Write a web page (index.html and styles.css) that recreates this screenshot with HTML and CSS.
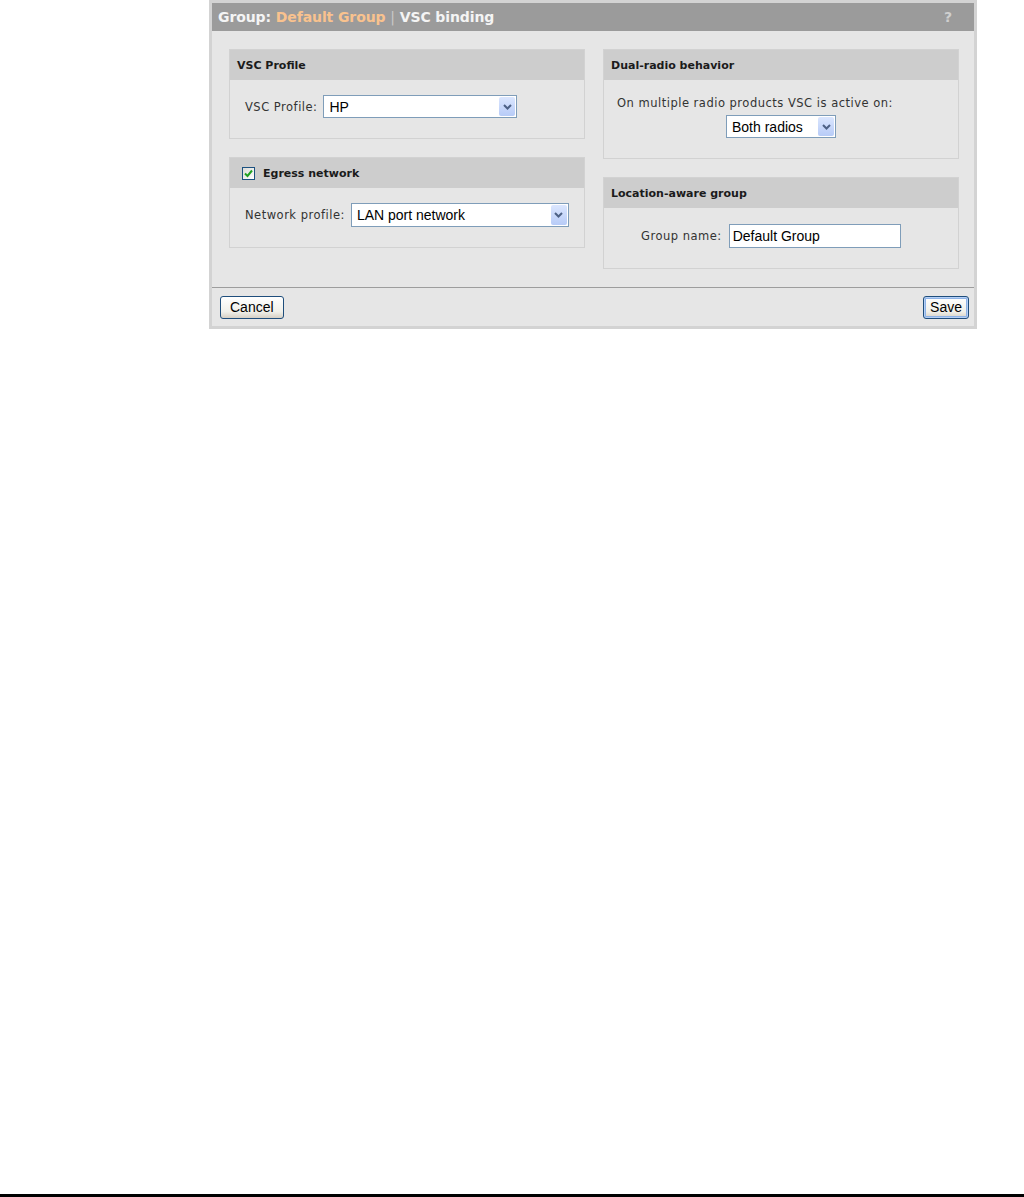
FILE: index.html
```html
<!DOCTYPE html>
<html lang="en">
<head>
  <meta charset="UTF-8">
  <title>Group: Default Group | VSC binding</title>
  <link rel="stylesheet" href="styles.css">
</head>
<body>
<div class="page">
  <!-- Settings panel -->
  <div class="panel">
    <div class="titlebar">
      <span class="title">Group: <span class="group-name">Default Group</span> <span class="sep">|</span> VSC binding</span>
      <span class="help">?</span>
    </div>

    <div class="content">
      <div class="column">
        <div class="box">
          <div class="box-head">VSC Profile</div>
          <div class="box-body">
            <div class="field">
              <span class="label">VSC Profile:</span>
              <span class="selbox w-vsc">
                <select><option>HP</option></select>
                <span class="arrow"><svg viewBox="0 0 9 6"><path d="M1 1l3.5 3.5L8 1"/></svg></span>
              </span>
            </div>
          </div>
        </div>

        <div class="box">
          <div class="box-head">
            <span class="check"><svg viewBox="0 0 11 11"><path d="M2 5.5l2.5 2.5L9 2.5"/></svg></span>
            Egress network
          </div>
          <div class="box-body">
            <div class="field">
              <span class="label">Network profile:</span>
              <span class="selbox w-net">
                <select><option>LAN port network</option></select>
                <span class="arrow"><svg viewBox="0 0 9 6"><path d="M1 1l3.5 3.5L8 1"/></svg></span>
              </span>
            </div>
          </div>
        </div>
      </div>

      <div class="column">
        <div class="box">
          <div class="box-head">Dual-radio behavior</div>
          <div class="box-body dual">
            <div class="label">On multiple radio products VSC is active on:</div>
            <span class="selbox w-radio">
              <select><option>Both radios</option></select>
              <span class="arrow"><svg viewBox="0 0 9 6"><path d="M1 1l3.5 3.5L8 1"/></svg></span>
            </span>
          </div>
        </div>

        <div class="box">
          <div class="box-head">Location-aware group</div>
          <div class="box-body location">
            <div class="field">
              <span class="label">Group name:</span>
              <input class="text-input" type="text" value="Default Group">
            </div>
          </div>
        </div>
      </div>
    </div>

    <div class="footer">
      <button class="btn">Cancel</button>
      <button class="btn btn-default">Save</button>
    </div>
  </div>

  <div class="rule"></div>
</div>
</body>
</html>
```

FILE: styles.css
```css
body {
  margin: 0;
  background: #fff;
  font-family: "DejaVu Sans", Verdana, sans-serif;
}

.page {
  min-height: 100vh;
  display: flex;
  flex-direction: column;
  padding-left: 209px;
  box-sizing: border-box;
}

/* Panel frame */
.panel {
  width: 768px;
  box-sizing: border-box;
  border: 3px solid #d3d3d3;
  background: #e6e6e6;
}

.titlebar {
  height: 28px;
  background: #9b9b9b;
  display: flex;
  align-items: center;
  justify-content: space-between;
  padding: 0 22px 0 6px;
  font-weight: bold;
  font-size: 14px;
  color: #f4f4f4;
  letter-spacing: -0.1px;
}

.group-name {
  color: #f9c28e;
}

.sep {
  color: #c9c9c9;
  font-weight: normal;
}

.help {
  color: #cfcfcf;
}

/* Two columns of boxes */
.content {
  display: grid;
  grid-template-columns: 356px 356px;
  column-gap: 18px;
  align-items: start;
  padding: 18px 15px 18px 17px;
}

.column {
  display: flex;
  flex-direction: column;
  gap: 18px;
}

.box {
  border: 1px solid #d2d2d2;
}

.box-head {
  height: 30px;
  background: #cdcdcd;
  display: flex;
  align-items: center;
  padding-left: 7px;
  font-size: 11px;
  font-weight: bold;
  color: #1b1b1b;
}

.box-body {
  padding: 15px 15px 20px;
}

.field {
  display: flex;
  align-items: center;
  gap: 6px;
}

.label {
  font-size: 11.5px;
  color: #333;
  letter-spacing: 0.5px;
  white-space: nowrap;
}

.dual {
  padding: 16px 13px 20px;
  display: flex;
  flex-direction: column;
}

.dual .label {
  line-height: 14px;
  margin-bottom: 5px;
}

.dual .selbox {
  align-self: center;
}

.location {
  padding: 16px 15px 20px 37px;
}

.location .field {
  gap: 7px;
}

/* Select boxes */
.selbox {
  display: flex;
  flex-shrink: 0;
  align-items: stretch;
  height: 23px;
  box-sizing: border-box;
  border: 1px solid #7f9db9;
  background: #fff;
}

.selbox select {
  flex: 1;
  min-width: 0;
  appearance: none;
  -webkit-appearance: none;
  border: none;
  outline: none;
  background: transparent;
  padding: 0 5px;
  font-family: "Liberation Sans", Arial, sans-serif;
  font-size: 14px;
  color: #000;
}

.arrow {
  width: 16px;
  margin: 1px;
  border-radius: 2px;
  background: linear-gradient(#dbe6fe, #b7cbf7);
  display: flex;
  align-items: center;
  justify-content: center;
}

.arrow svg {
  width: 9px;
  height: 6px;
  fill: none;
  stroke: #4d6185;
  stroke-width: 2;
}

.w-vsc { width: 194px; }
.w-net { width: 218px; height: 24px; }
.w-radio { width: 110px; }

.text-input {
  width: 172px;
  height: 24px;
  box-sizing: border-box;
  border: 1px solid #7f9db9;
  padding: 0 3px;
  font-family: "Liberation Sans", Arial, sans-serif;
  font-size: 14px;
  color: #000;
}

/* Checkbox in header */
.check {
  width: 13px;
  height: 13px;
  box-sizing: border-box;
  border: 1px solid #1c5180;
  background: linear-gradient(135deg, #dcdcd7, #fff);
  margin: 0 8px 0 5px;
  display: flex;
  align-items: center;
  justify-content: center;
}

.check svg {
  width: 11px;
  height: 11px;
  fill: none;
  stroke: #21a121;
  stroke-width: 2;
}

/* Footer buttons */
.footer {
  height: 38px;
  border-top: 1px solid #9d9d9d;
  display: flex;
  align-items: center;
  justify-content: space-between;
  padding: 0 5px 0 8px;
}

.btn {
  height: 23px;
  padding: 0 9px;
  border: 1px solid #1f4e7c;
  border-radius: 3px;
  background: linear-gradient(#ffffff, #f0f0ea 70%, #d6d0c5);
  font-family: "Liberation Sans", Arial, sans-serif;
  font-size: 14px;
  color: #000;
  cursor: pointer;
}

.btn-default {
  box-shadow: inset 0 0 0 1px #b5d0f6, inset 0 0 0 2px #8db2e6;
  padding: 0 6px;
}

.rule {
  margin-top: auto;
  margin-left: -209px;
  height: 3px;
  background: #000;
}
```
